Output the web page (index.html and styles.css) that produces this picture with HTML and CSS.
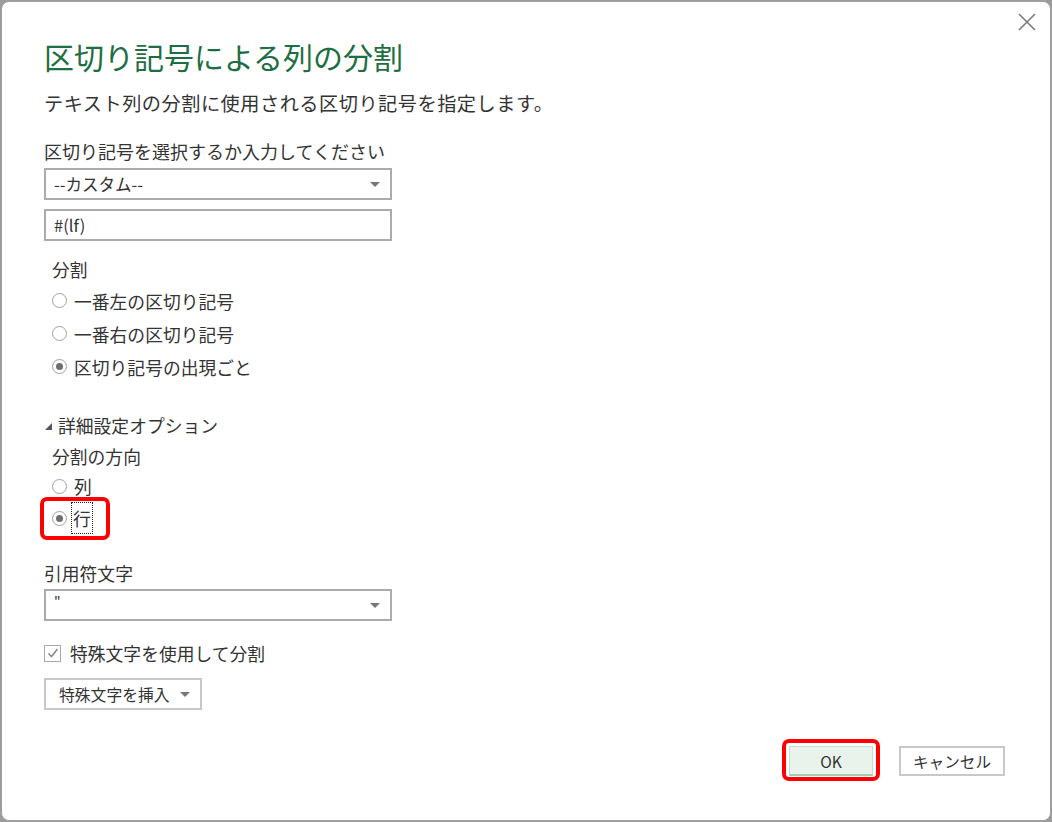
FILE: index.html
```html
<!DOCTYPE html>
<html lang="ja">
<head>
<meta charset="utf-8">
<link rel="stylesheet" href="styles.css">
</head>
<body>
<div class="dialog">
  <button class="close" aria-label="close">
    <svg width="20" height="20" viewBox="0 0 20 20"><path d="M2 2 L18 18 M18 2 L2 18" stroke="#7a7a7a" stroke-width="1.6" fill="none"/></svg>
  </button>
  <div class="content">
    <h1 class="title">区切り記号による列の分割</h1>
    <p class="subtitle">テキスト列の分割に使用される区切り記号を指定します。</p>
    <div class="label">区切り記号を選択するか入力してください</div>
    <div class="select s1"><span>--カスタム--</span><i class="caret"></i></div>
    <div class="input">#(lf)</div>
    <div class="sublabel split-label">分割</div>
    <div class="radio r1"><span class="dot"></span><span>一番左の区切り記号</span></div>
    <div class="radio"><span class="dot"></span><span>一番右の区切り記号</span></div>
    <div class="radio"><span class="dot on"></span><span>区切り記号の出現ごと</span></div>
    <div class="advanced"><svg width="9" height="9" viewBox="0 0 9 9"><polygon points="8,1 8,8 1,8" fill="#555"/></svg><span>詳細設定オプション</span></div>
    <div class="sublabel dir-label">分割の方向</div>
    <div class="radio r-col"><span class="dot"></span><span>列</span></div>
    <div class="radio r-row"><span class="dot on"></span><span class="focus">行</span><span class="hl"></span></div>
    <div class="label quote-label">引用符文字</div>
    <div class="select s2"><span class="q">"</span><i class="caret"></i></div>
    <div class="check"><span class="box"><svg width="14" height="14" viewBox="0 0 14 14"><path d="M2.5 7.5 L5.5 10.5 L11.5 3" stroke="#8a8a8a" stroke-width="1.6" fill="none"/></svg></span><span>特殊文字を使用して分割</span></div>
    <div class="insert"><span>特殊文字を挿入</span><i class="caret"></i></div>
  </div>
  <div class="footer">
    <button class="btn ok">OK</button>
    <button class="btn cancel">キャンセル</button>
  </div>
</div>
</body>
</html>
```
FILE: styles.css
```css
* { box-sizing: border-box; }
html, body { margin: 0; padding: 0; }
body {
  background: #9c9c9c;
  width: 1052px;
  height: 822px;
  overflow: hidden;
  font-family: "Noto Sans CJK JP", "Noto Sans", sans-serif;
  color: #333;
}
.dialog {
  position: relative;
  margin: 1px 0 0 1px;
  width: 1050px;
  height: 820px;
  background: #fff;
  border: 1px solid #a0a0a0;
  border-radius: 8px;
  display: flex;
  flex-direction: column;
}
.close {
  position: absolute;
  top: 9px;
  right: 12px;
  width: 22px;
  height: 22px;
  padding: 0;
  border: 0;
  background: transparent;
  display: flex;
  align-items: center;
  justify-content: center;
}
.content {
  padding-left: 42px;
  display: flex;
  flex-direction: column;
  align-items: flex-start;
}
.title {
  margin: 34px 0 0;
  font-size: 30px;
  line-height: 40px;
  font-weight: 400;
  color: #1e6e43;
}
.subtitle {
  margin: 14px 0 0;
  font-size: 19.2px;
  letter-spacing: 0.5px;
  line-height: 26px;
  color: #333;
}
.label {
  margin-top: 23px;
  font-size: 18px;
  line-height: 24px;
}
.select, .input {
  width: 348px;
  height: 32px;
  border: 2px solid #ababab;
  background: #fff;
  display: flex;
  align-items: center;
  padding: 0 0 0 8px;
  font-size: 16.5px;
  color: #333;
}
.select { justify-content: space-between; padding-right: 10px; }
.s1 { margin-top: 5px; }
.input { margin-top: 9px; }
.caret {
  display: block;
  width: 0;
  height: 0;
  border-left: 5px solid transparent;
  border-right: 5px solid transparent;
  border-top: 5px solid #777;
}
.sublabel {
  margin-left: 8px;
  font-size: 17.8px;
  line-height: 24px;
}
.split-label { margin-top: 16px; }
.radio {
  margin-left: 8px;
  height: 33px;
  display: flex;
  align-items: center;
  font-size: 17.8px;
  gap: 7px;
  position: relative;
}
.r1 { margin-top: 3px; }
.dot {
  width: 15px;
  height: 15px;
  border: 1px solid #a0a0a0;
  border-radius: 50%;
  display: flex;
  align-items: center;
  justify-content: center;
  background: #fff;
}
.dot.on::after {
  content: "";
  width: 7px;
  height: 7px;
  border-radius: 50%;
  background: #6e6e6e;
}
.advanced {
  margin-top: 30px;
  height: 24px;
  display: flex;
  align-items: center;
  gap: 5px;
  font-size: 17.8px;
}
.advanced svg { margin-top: 2px; }
.dir-label { margin-top: 7px; }
.r-col { margin-top: 3px; height: 30px; }
.r-row { margin-top: 2px; height: 30px; }
.focus {
  outline: 1px dotted #222;
  outline-offset: 0;
  padding: 4px 1px;
  line-height: 22px;
  margin-left: -2px;
}
.hl {
  position: absolute;
  left: -12px;
  top: -6px;
  width: 70px;
  height: 43px;
  border: 4px solid #ff0000;
  border-radius: 7px;
}
.quote-label { margin-top: 28px; font-size: 17.8px; }
.s2 { margin-top: 4px; }
.q { font-size: 14px; margin-top: -6px; }
.check {
  margin-top: 20px;
  height: 24px;
  display: flex;
  align-items: center;
  gap: 9px;
  font-size: 17.8px;
}
.box {
  width: 17px;
  height: 17px;
  border: 1px solid #a8a8a8;
  display: flex;
  align-items: center;
  justify-content: center;
}
.insert {
  margin-top: 13px;
  width: 158px;
  height: 32px;
  border: 2px solid #c8c8c8;
  display: flex;
  align-items: center;
  padding-left: 13px;
  gap: 10px;
  font-size: 15.8px;
}
.footer {
  margin-top: 36px;
  display: flex;
  justify-content: flex-end;
  gap: 26px;
  padding-right: 45px;
}
.btn {
  font-family: "Noto Sans CJK JP", "Noto Sans", sans-serif;
  font-size: 15.6px;
  color: #333;
  height: 30px;
  padding: 0;
  position: relative;
}
.ok {
  width: 84px;
  background: #e9f3ec;
  border: 1px solid #c2e1cd;
  border-bottom: 2px solid #9fcfb1;
}
.ok::after {
  content: "";
  position: absolute;
  left: -8px;
  top: -8px;
  right: -8px;
  bottom: -7px;
  border: 4px solid #ff0000;
  border-radius: 7px;
}
.cancel {
  width: 106px;
  background: #fff;
  border: 2px solid #c8c8c8;
}
```
